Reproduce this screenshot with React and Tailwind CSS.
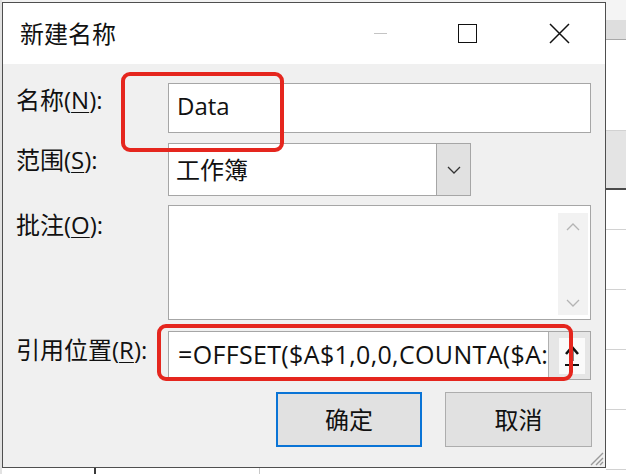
import React from "react";

const font = "font-['Open_Sans','Noto_Sans_CJK_SC',sans-serif]";

function Label({ text, k, className = "" }) {
  return (
    <div className={`w-[165px] pl-[13px] text-[24px] leading-[32px] text-[#111] ${className}`}>
      {text}(<span className="underline underline-offset-[3px] decoration-1">{k}</span>):
    </div>
  );
}

function Chevron({ up = false, className = "" }) {
  return (
    <svg width="14" height="8" viewBox="0 0 14 8" className={className}>
      <path
        d={up ? "M1 7 L7 1 L13 7" : "M1 1 L7 7 L13 1"}
        fill="none"
        stroke="currentColor"
        strokeWidth="1.3"
      />
    </svg>
  );
}

function RightStrip() {
  return (
    <div className="flex-1 flex flex-col bg-white">
      <div className="h-[20px] bg-[#f4f4f4]" />
      <div className="h-[20px] bg-[#dedede] border-b border-[#a9a9a9]" />
      <div className="h-[91px] border-b border-[#d2d2d2]" />
      <div className="h-[59px] bg-[#e4e4e4] border-b-2 border-[#4a4a4a]" />
      <div className="h-[40px] border-b border-[#d2d2d2]" />
      <div className="h-[60px] border-b border-[#d2d2d2]" />
      <div className="h-[60px] border-b border-[#d2d2d2]" />
      <div className="h-[60px] border-b border-[#d2d2d2]" />
      <div className="h-[60px] border-b border-[#d2d2d2]" />
    </div>
  );
}

export default function App() {
  return (
    <div className={`w-[626px] h-[474px] flex bg-white overflow-hidden ${font}`}>
      <div className="w-[2px] bg-[#e2e2e2]" />

      <div className="w-[604px] flex flex-col">
        <div className="h-[2px] bg-[#f2f2f2]" />

        {/* dialog window */}
        <div className="relative h-[466px] border border-[#4f4f4f] bg-[#f0f0f0] flex flex-col">
          {/* title bar */}
          <div className="h-[61px] bg-white flex items-center">
            <div className="pl-[17px] text-[24px] text-[#111] leading-none">新建名称</div>
            <div className="ml-auto flex h-full">
              <div className="w-[82px] flex items-center justify-center">
                <div className="w-[13px] h-px bg-[#c4c4c4]" />
              </div>
              <div className="w-[92px] flex items-center justify-center">
                <div className="w-[19px] h-[19px] border-[1.5px] border-[#111]" />
              </div>
              <div className="w-[92px] flex items-center justify-center">
                <svg width="21" height="21" viewBox="0 0 21 21">
                  <path d="M1 1 L20 20 M20 1 L1 20" stroke="#111" strokeWidth="1.5" />
                </svg>
              </div>
            </div>
          </div>

          {/* body */}
          <div className="flex-1 flex flex-col pt-[19px]">
            <div className="flex items-start">
              <Label text="名称" k="N" className="pt-[1px]" />
              <div className="w-[423px] h-[50px] bg-white border border-[#a6a6a6] flex items-center pl-[8px] pb-[4px] text-[24px] text-[#111]">
                Data
              </div>
            </div>

            <div className="flex items-start mt-[10px]">
              <Label text="范围" k="S" className="pt-[1px]" />
              <div className="w-[303px] h-[53px] bg-white border border-[#a6a6a6] flex">
                <div className="flex-1 flex items-center pl-[7px] text-[24px] text-[#111]">工作簿</div>
                <div className="w-[34px] bg-[#e1e1e1] border-l border-[#a6a6a6] flex items-center justify-center text-[#333]">
                  <Chevron />
                </div>
              </div>
            </div>

            <div className="flex items-start mt-[9px]">
              <Label text="批注" k="O" className="pt-[4px]" />
              <div className="w-[423px] h-[115px] bg-white border border-[#a6a6a6] flex justify-end pt-[7px] pr-[2px] pb-[4px]">
                <div className="w-[30px] bg-[#f2f2f2] flex flex-col items-center justify-between pt-[10px] pb-[8px] text-[#b4b4b4]">
                  <Chevron up />
                  <Chevron />
                </div>
              </div>
            </div>

            <div className="flex items-start mt-[11px]">
              <Label text="引用位置" k="R" className="pt-[3px]" />
              <div className="w-[423px] h-[49px] bg-white border border-[#a6a6a6] flex">
                <div className="flex-1 flex items-center pl-[9px] pb-[2px] text-[25px] tracking-[0.35px] text-[#111] whitespace-nowrap overflow-hidden">
                  =OFFSET($A$1,0,0,COUNTA($A:
                </div>
                <div className="w-[42px] bg-[#e6e6e6] border-l border-[#b0b0b0] flex items-center justify-center pl-[4px]">
                  <div className="w-[26px] h-[36px] bg-[#fafafa] flex items-center justify-center">
                    <svg width="16" height="22" viewBox="0 0 16 22">
                      <path d="M8 3 L8 16" stroke="#111" strokeWidth="3" />
                      <path d="M2 9 L8 2 L14 9" fill="none" stroke="#111" strokeWidth="2.6" />
                      <path d="M1 20 L15 20" stroke="#111" strokeWidth="2" />
                    </svg>
                  </div>
                </div>
              </div>
            </div>

            <div className="flex justify-end gap-[23px] mt-[12px] pr-[13px]">
              <button className="w-[146px] h-[55px] bg-[#e1e1e1] border-2 border-[#0a74d6] text-[24px] text-[#111]">
                确定
              </button>
              <button className="w-[147px] h-[55px] bg-[#e1e1e1] border border-[#adadad] text-[24px] text-[#111]">
                取消
              </button>
            </div>
          </div>

          {/* resize grip */}
          <svg
            width="16"
            height="16"
            viewBox="0 0 16 16"
            className="absolute right-[1px] bottom-[1px]"
          >
            <path d="M15 3 L3 15 M15 8 L8 15 M15 12 L12 15" stroke="#9a9a9a" strokeWidth="1.4" />
          </svg>

          {/* red annotation boxes */}
          <div className="absolute left-[118px] top-[69px] w-[163px] h-[80px] border-[4px] border-[#e5261e] rounded-[9px]" />
          <div className="absolute left-[154px] top-[321px] w-[416px] h-[57px] border-[4px] border-[#e5261e] rounded-[9px]" />
        </div>

        <div className="flex-1 flex bg-white">
          <div className="w-[94px] border-r-2 border-[#3a3a3a]" />
          <div className="w-[164px] border-r border-[#c8c8c8]" />
        </div>
      </div>

      <RightStrip />
    </div>
  );
}
